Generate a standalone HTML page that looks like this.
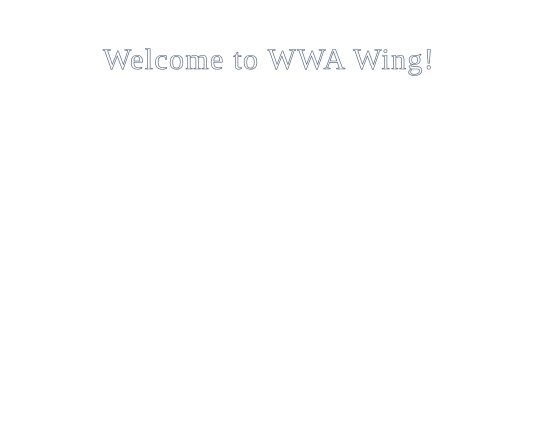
<!DOCTYPE html>
<html><head><style>
html,body{margin:0;width:560px;height:440px;background:#fff;overflow:hidden}
h1{position:absolute;left:0;width:538px;top:43px;margin:0;text-align:center;font:normal 30px "Liberation Serif",serif;letter-spacing:1.3px;color:#fff;-webkit-text-stroke:0.6px #4a5a78;white-space:nowrap}
</style></head><body>
<h1>Welcome to WWA Wing!</h1>
</body></html>
